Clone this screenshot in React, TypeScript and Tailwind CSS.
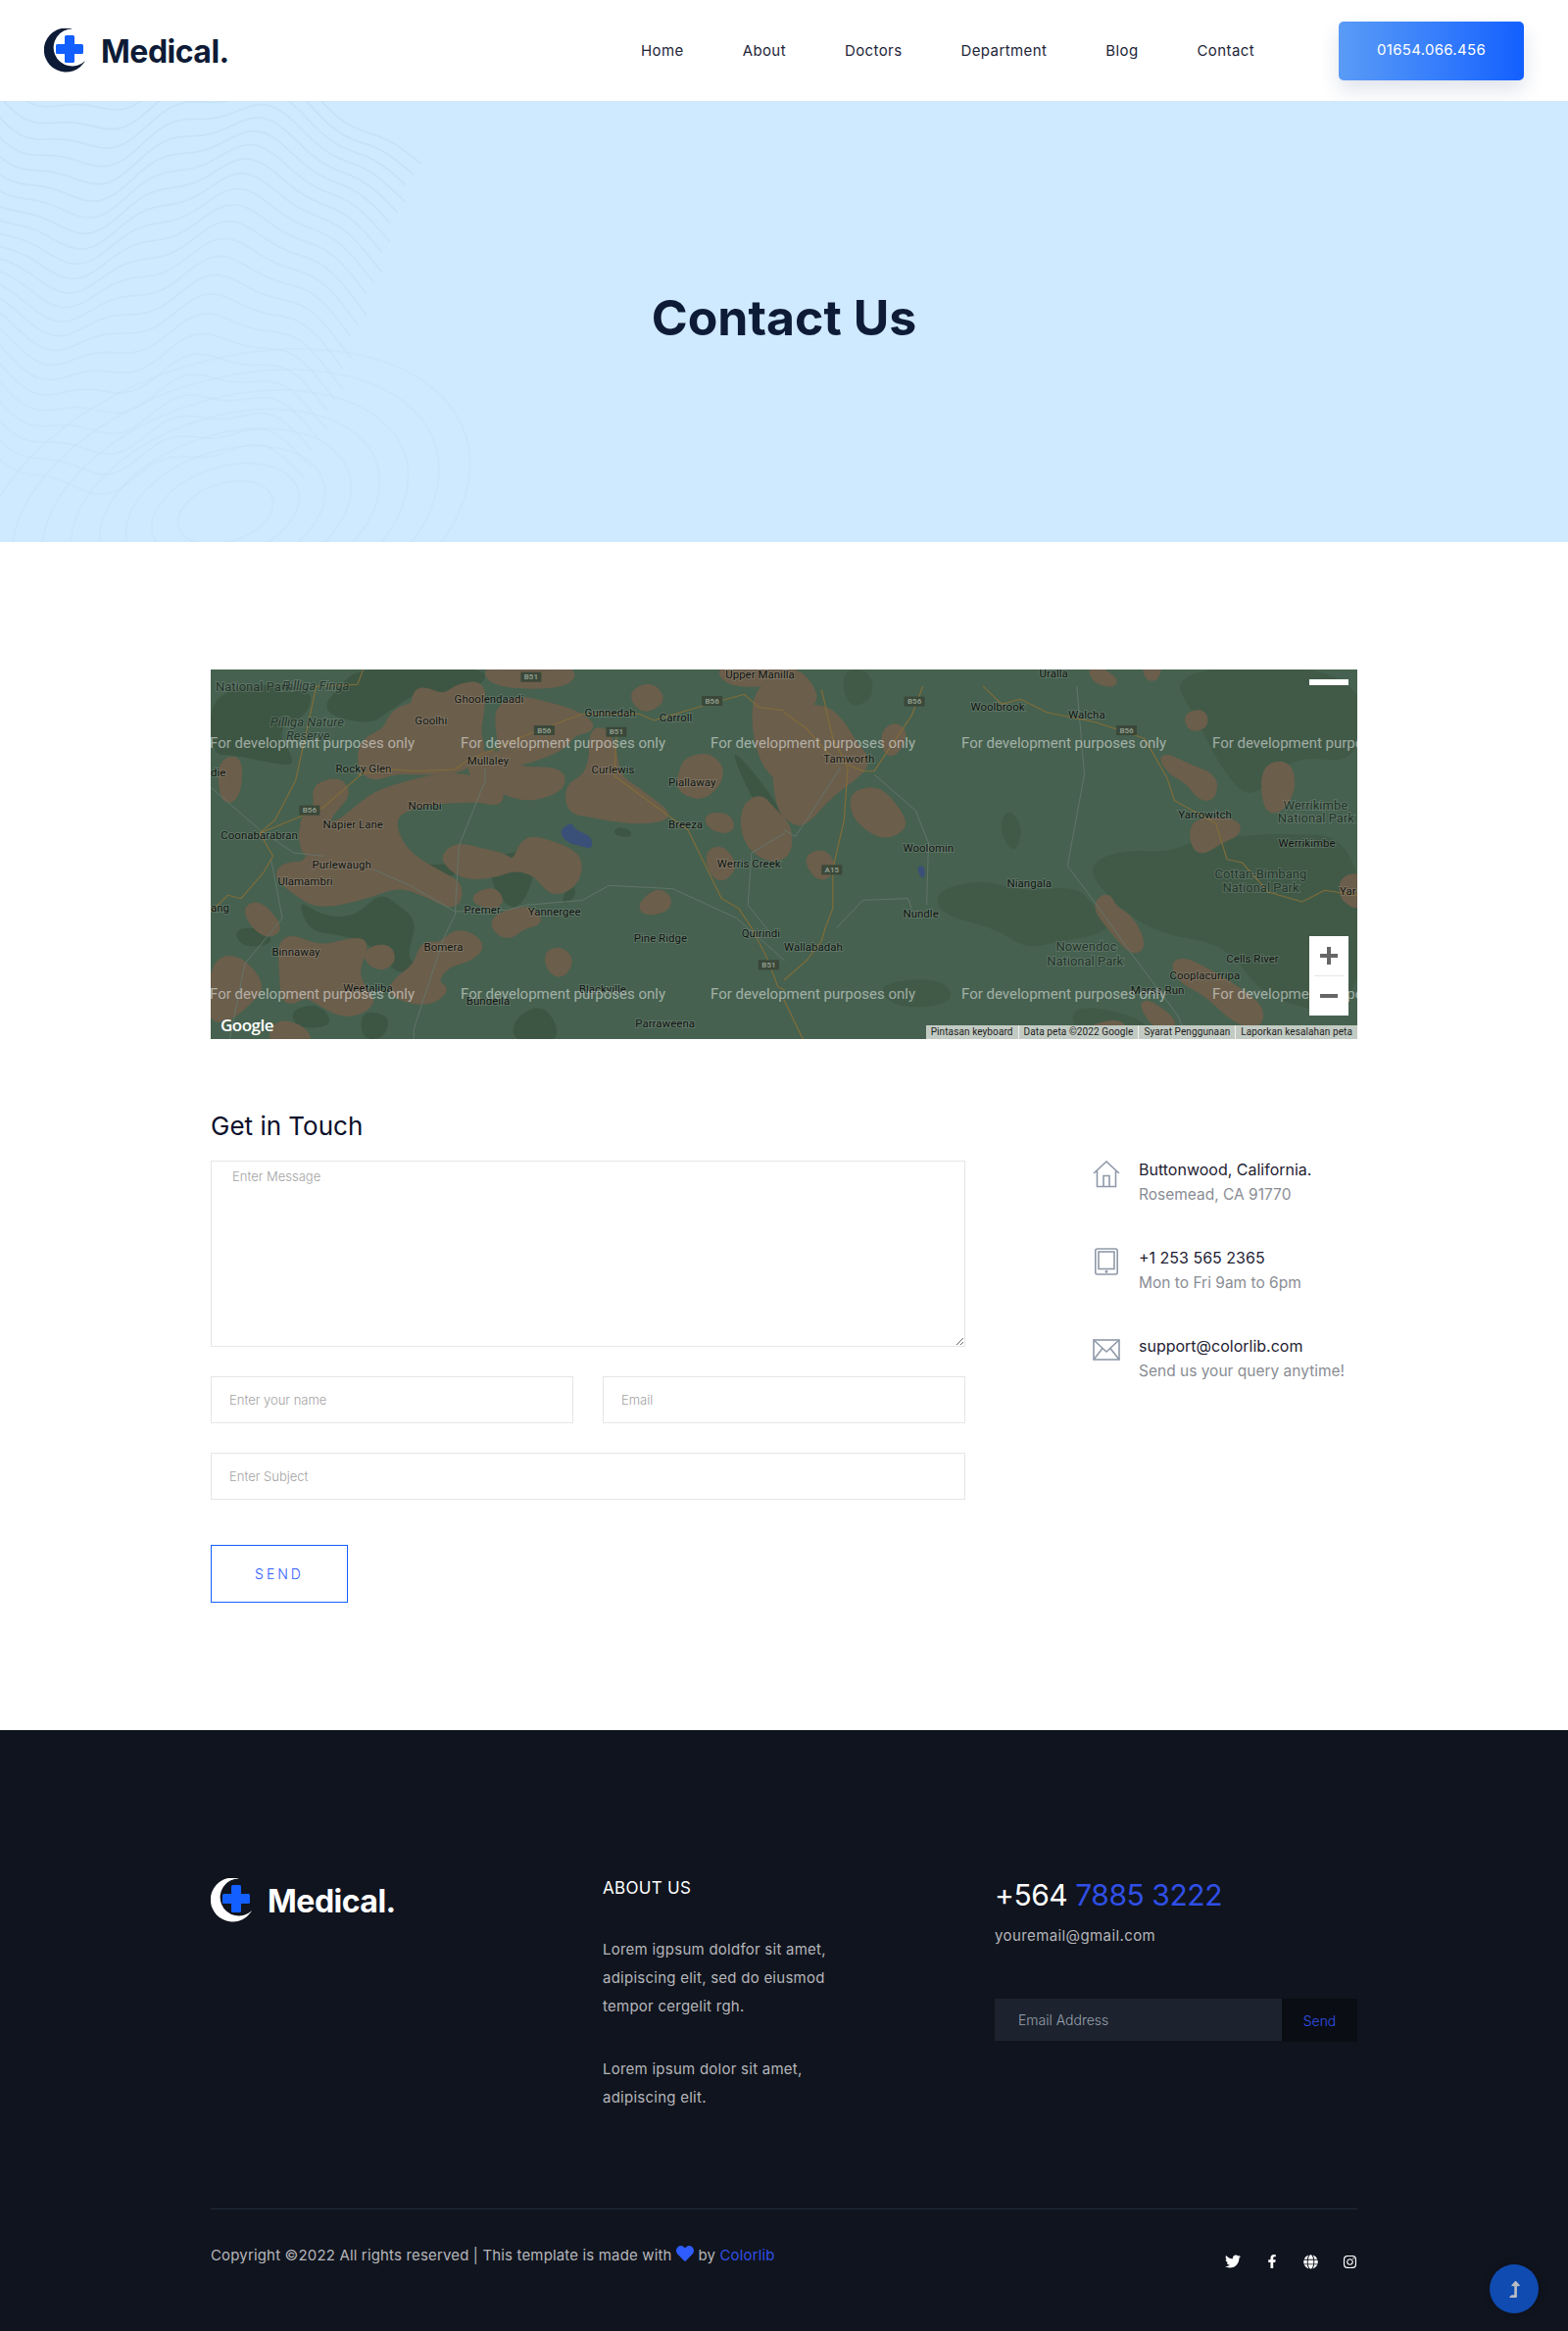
import { FaTwitter, FaFacebookF, FaGlobe, FaInstagram, FaLevelUpAlt, FaHeart } from 'react-icons/fa';

// map sketch: shapes are noted in crop coordinates, left crop and right crop
const LEFT = 'translate(-15 -13) scale(0.3831 0.3333)';
const RIGHT = 'translate(585 -13) scale(0.3831 0.3333)';
const toLeft = (x: number, y: number) => [x / 2.61 - 15, y / 3 - 13];
const toRight = (x: number, y: number) => [x / 2.61 + 585, y / 3 - 13];

function blob(points: number[]) {
  const pts: number[][] = [];
  for (let i = 0; i < points.length; i += 2) pts.push([points[i], points[i + 1]]);
  const mid = (a: number[], b: number[]) => [(a[0] + b[0]) / 2, (a[1] + b[1]) / 2];
  const start = mid(pts[pts.length - 1], pts[0]);
  let d = `M${start[0]} ${start[1]}`;
  pts.forEach((p, i) => {
    const m = mid(p, pts[(i + 1) % pts.length]);
    d += `Q${p[0]} ${p[1]} ${m[0]} ${m[1]}`;
  });
  return d + 'Z';
}

const darkLeft = [
  [39, 90, 310, 85, 300, 180, 210, 220, 270, 330, 220, 330, 100, 300, 39, 300],
  [440, 30, 770, 30, 770, 85, 700, 85, 660, 125, 600, 100, 510, 170, 460, 210, 330, 170, 380, 90],
  [800, 610, 880, 590, 905, 660, 870, 760, 830, 770, 780, 680],
  [270, 740, 330, 790, 420, 800, 490, 720, 540, 760, 590, 810, 560, 920, 590, 940, 540, 980, 470, 880, 380, 850, 300, 840],
  [850, 1100, 930, 1060, 980, 1180, 840, 1180],
  [530, 590, 600, 640, 690, 630, 690, 680, 600, 680, 540, 650],
  [990, 700, 1010, 700, 1010, 740, 970, 760],
  [1120, 520, 1160, 530, 1160, 555, 1110, 545],
  [1420, 280, 1470, 330, 1568, 480, 1568, 560, 1500, 480],
  [100, 830, 180, 830, 210, 880, 120, 890],
  [250, 1080, 330, 1060, 370, 1130, 270, 1140],
  [440, 1080, 520, 1100, 500, 1170, 440, 1170],
];
const brownLeft = [
  [760, 85, 700, 95, 660, 130, 600, 100, 585, 130, 590, 150, 530, 170, 510, 230, 450, 260, 440, 330, 470, 370, 530, 345, 600, 350, 700, 345, 735, 310, 760, 290, 745, 230, 755, 170],
  [770, 30, 1000, 30, 990, 85, 800, 85],
  [810, 160, 860, 130, 930, 150, 1000, 170, 1060, 215, 1000, 230, 970, 280, 840, 330, 820, 300, 810, 210],
  [730, 300, 840, 300, 850, 350, 970, 350, 970, 400, 900, 430, 845, 420, 810, 400, 745, 380],
  [1060, 230, 1090, 230, 1110, 300, 1120, 370, 1170, 410, 1240, 470, 1250, 490, 1180, 500, 1100, 490, 1060, 480, 1000, 470, 995, 400, 1040, 370, 1060, 320],
  [320, 400, 380, 380, 400, 420, 360, 470, 340, 510, 380, 520, 470, 430, 540, 400, 640, 370, 735, 370, 770, 410, 810, 420, 800, 445, 750, 430, 620, 440, 530, 470, 520, 530, 560, 610, 650, 670, 700, 700, 690, 765, 620, 725, 540, 690, 450, 730, 330, 760, 270, 720, 220, 670, 240, 640, 300, 640, 320, 560, 280, 510, 330, 460],
  [665, 610, 700, 580, 760, 600, 810, 610, 850, 640, 880, 560, 930, 570, 1000, 600, 1020, 640, 1000, 700, 950, 720, 910, 660, 850, 640, 790, 665, 720, 670, 680, 640],
  [740, 740, 790, 715, 810, 750, 780, 760],
  [800, 800, 880, 770, 915, 810, 870, 820, 830, 855, 800, 830],
  [1190, 760, 1230, 720, 1255, 740, 1250, 770, 1200, 780],
  [1310, 320, 1360, 305, 1395, 340, 1385, 390, 1340, 430, 1290, 400, 1300, 350],
  [1370, 490, 1410, 490, 1425, 520, 1400, 530, 1370, 510],
  [1460, 470, 1500, 430, 1530, 470, 1575, 520, 1575, 600, 1530, 620, 1470, 570],
  [1370, 600, 1400, 590, 1430, 640, 1400, 680, 1375, 650],
  [1490, 100, 1575, 80, 1575, 400, 1500, 300],
  [1170, 110, 1210, 90, 1240, 130, 1200, 160, 1175, 140],
  [1390, 30, 1575, 30, 1575, 70, 1430, 85],
  [140, 770, 170, 760, 220, 830, 190, 850, 150, 810],
  [50, 940, 110, 920, 175, 1010, 130, 1060, 90, 1100, 39, 1110],
  [230, 850, 330, 900, 420, 870, 450, 880, 420, 960, 440, 1020, 470, 1060, 400, 1100, 310, 1040, 290, 1030, 240, 1060, 235, 980],
  [610, 880, 650, 890, 700, 840, 760, 880, 730, 920, 660, 940, 630, 1000, 665, 1020, 610, 1060, 520, 1030, 540, 990, 590, 950],
  [465, 900, 510, 890, 520, 930, 490, 950, 460, 925],
  [940, 910, 970, 900, 995, 930, 970, 975, 945, 950],
  [220, 1120, 280, 1140, 300, 1180, 200, 1180],
  [70, 330, 110, 310, 110, 400, 90, 440, 75, 420],
  [290, 510, 340, 520, 340, 590, 300, 610, 285, 560],
];
const darkRight = [
  [800, 640, 900, 590, 1020, 600, 1100, 560, 1300, 540, 1540, 550, 1540, 1110, 1280, 1050, 1180, 880, 1000, 850, 880, 760],
  [1020, 30, 1540, 30, 1540, 330, 1350, 300, 1250, 440, 1180, 370, 1100, 200],
  [400, 720, 520, 680, 640, 720, 780, 700, 830, 770, 880, 840, 700, 880, 640, 890, 560, 830, 420, 790],
  [570, 520, 600, 460, 640, 530, 610, 610],
  [240, 1000, 420, 980, 460, 1060, 300, 1080],
  [760, 1060, 950, 1100, 980, 1170, 780, 1170],
  [150, 40, 230, 40, 240, 130, 170, 160],
];
const brownRight = [
  [-20, 170, 100, 150, 150, 200, 180, 260, 230, 330, 120, 420, 60, 500, 30, 510, -20, 450],
  [-20, 30, 55, 60, 90, 150, -20, 150],
  [185, 420, 250, 405, 300, 470, 320, 520, 270, 550, 220, 520, 190, 480],
  [70, 610, 110, 600, 130, 650, 100, 680, 70, 640],
  [270, 230, 300, 210, 320, 240, 290, 300, 270, 280],
  [1005, 300, 1080, 340, 1145, 370, 1140, 430, 1110, 430, 1080, 380, 1030, 350],
  [1280, 340, 1340, 325, 1355, 400, 1320, 470, 1285, 465],
  [1075, 180, 1115, 170, 1120, 210, 1085, 220],
  [1095, 510, 1150, 500, 1205, 510, 1205, 540, 1160, 560, 1110, 600, 1090, 560],
  [830, 765, 860, 730, 875, 770, 920, 800, 955, 880, 930, 905, 880, 840],
  [1040, 940, 1070, 930, 1150, 980, 1220, 1030, 1270, 1080, 1260, 1130, 1200, 1110, 1130, 1030, 1060, 990],
  [950, 1050, 1010, 1090, 1040, 1130, 990, 1130],
  [1490, 680, 1540, 670, 1540, 770, 1490, 740],
  [820, 30, 880, 70, 870, 85, 830, 70],
  [960, 30, 1000, 30, 980, 75],
  [810, 1140, 900, 1115, 910, 1180, 830, 1180],
];

const orangeLeft = [
  '445,40 430,85 320,90 300,200 265,380 210,500 170,540 340,460 450,350',
  '430,360 530,345 580,350 690,345 720,320 900,230 1030,175 1180,175 1220,195 1350,150 1460,115 1500,155 1568,165',
  '1120,230 1115,365 1250,480 1310,530 1400,740 1445,770 1480,830 1520,920 1550,1010 1568,1020',
  '170,540 205,610 180,660 120,740 85,730 40,780',
];
const greyLeft = [
  '770,340 770,380 700,580 690,790 660,860 580,1140 580,1170',
  '470,650 570,700 690,780 830,775 880,760 1030,745 1100,700 1270,710 1440,800 1568,930',
  '200,620 230,800 130,940 90,1170',
  '40,400 90,450 170,530 260,600 340,610',
  '1568,540 1480,600 1470,760 1540,860',
];
const orangeRight = [
  '100,100 130,250 170,340 160,500 130,650 130,770 110,830 100,870 60,930 0,990',
  '370,90 340,180 240,350 210,350 170,330',
  '530,90 580,145 630,130 700,170 830,200 960,250 1020,370 1040,440 1150,510 1180,620 1220,630 1290,720 1380,750 1440,715 1530,730',
  '0,170 60,220 120,300',
  '0,1050 50,1170',
];
const greyRight = [
  '240,360 350,470 385,570 380,760',
  '780,90 800,360 755,640 840,770 920,900 1050,1100 1060,1130',
  '140,830 210,745 330,740 340,770',
  '150,340 60,500 30,550 0,530',
];

type Label = [number, number, string, number?];
// [left, middle, text, kind]  kind 1 = park name, 2 = italic park name
const labelsLeft: Label[] = [
  [1410, 58, 'Upper Manilla'], [688, 132, 'Ghoolendaadi'], [583, 198, 'Goolhi'], [1035, 174, 'Gunnedah'],
  [1234, 189, 'Carroll'], [198, 203, 'Pilliga Nature', 2], [240, 244, 'Reserve', 2], [52, 95, 'National Park', 1],
  [230, 93, 'Pilliga Finga', 2], [722, 322, 'Mullaley'], [372, 346, 'Rocky Glen'], [1053, 348, 'Curlewis'],
  [1258, 388, 'Piallaway'], [565, 459, 'Nombi'], [338, 516, 'Napier Lane'], [1258, 516, 'Breeza'],
  [66, 549, 'Coonabarabran'], [309, 640, 'Purlewaugh'], [1388, 636, 'Werris Creek'], [218, 690, 'Ulamambri'],
  [714, 778, 'Premer'], [884, 784, 'Yannergee'], [1166, 865, 'Pine Ridge'], [1453, 849, 'Quirindi'],
  [607, 892, 'Bomera'], [202, 907, 'Binnaway'], [392, 1017, 'Weetaliba'], [1020, 1020, 'Blackville'],
  [720, 1057, 'Bundella'], [1170, 1126, 'Parraweena'], [39, 357, 'die'], [39, 772, 'ang'],
];
const labelsRight: Label[] = [
  [680, 55, 'Uralla'], [497, 155, 'Woolbrook'], [757, 180, 'Walcha'], [105, 316, 'Tamworth'],
  [1050, 486, 'Yarrowitch'], [1330, 457, 'Werrikimbe', 1], [1315, 498, 'National Park', 1], [1317, 573, 'Werrikimbe'],
  [317, 588, 'Woolomin'], [1147, 667, 'Cottan-Bimbang', 1], [1168, 709, 'National Park', 1], [594, 697, 'Niangala'],
  [317, 790, 'Nundle'], [0, 891, 'Wallabadah'], [724, 891, 'Nowendoc', 1], [700, 934, 'National Park', 1],
  [1178, 927, 'Cells River'], [1027, 978, 'Cooplacurripa'], [923, 1023, 'Marss Run'], [1480, 720, 'Yar'],
];
const shieldsLeft: [number, number, string][] = [
  [865, 47, 'B51'], [1347, 120, 'B56'], [900, 210, 'B56'], [1092, 215, 'B51'], [275, 455, 'B56'], [1498, 928, 'B51'],
];
const shieldsRight: [number, number, string][] = [
  [320, 122, 'B56'], [885, 210, 'B56'], [100, 637, 'A15'],
];

function MapLabel({ at, text, kind }: { at: number[]; text: string; kind?: number }) {
  return (
    <text
      x={at[0]}
      y={at[1]}
      dominantBaseline="middle"
      fontFamily="Roboto, sans-serif"
      fontSize={kind ? 13 : 11.5}
      fontStyle={kind === 2 ? 'italic' : 'normal'}
      fill={kind ? '#24352a' : '#111511'}
      stroke="#ffffff"
      strokeOpacity={0.14}
      strokeWidth={2}
      paintOrder="stroke"
    >
      {text}
    </text>
  );
}

function Shield({ at, text }: { at: number[]; text: string }) {
  return (
    <g>
      <rect x={at[0]} y={at[1]} width={21} height={10} fill="#3b4839" />
      <text x={at[0] + 10.5} y={at[1] + 5.5} textAnchor="middle" dominantBaseline="middle" fontFamily="Roboto, sans-serif" fontSize={8} fontWeight={700} fill="#8d9a8a">
        {text}
      </text>
    </g>
  );
}

function MapDrawing() {
  const marks = [-1, 255, 510, 766, 1022];
  return (
    <svg viewBox="0 0 1170 377" width={1170} height={377} className="block">
      <rect width={1170} height={377} fill="#46614f" />
      <g transform={LEFT}>
        {darkLeft.map((p, i) => <path key={i} d={blob(p)} fill="#3d5643" />)}
        {brownLeft.map((p, i) => <path key={i} d={blob(p)} fill="#6b5e4b" stroke="#6b5e4b" strokeWidth={26} strokeLinejoin="round" />)}
        <path d={blob([965, 535, 1000, 505, 1010, 530, 1055, 550, 1055, 590, 1030, 580, 990, 570])} fill="#3a5078" />
        {greyLeft.map((p, i) => <polyline key={i} points={p} fill="none" stroke="#65756c" strokeWidth={2.500} />)}
        {orangeLeft.map((p, i) => <polyline key={i} points={p} fill="none" stroke="#846d38" strokeWidth={3} />)}
      </g>
      <g transform={RIGHT}>
        {darkRight.map((p, i) => <path key={i} d={blob(p)} fill="#415a48" />)}
        {brownRight.map((p, i) => <path key={i} d={blob(p)} fill="#6b5e4b" stroke="#6b5e4b" strokeWidth={22} strokeLinejoin="round" />)}
        <path d={blob([355, 640, 375, 640, 375, 680, 360, 670])} fill="#3a5078" />
        {greyRight.map((p, i) => <polyline key={i} points={p} fill="none" stroke="#65756c" strokeWidth={2.500} />)}
        {orangeRight.map((p, i) => <polyline key={i} points={p} fill="none" stroke="#846d38" strokeWidth={3} />)}
      </g>
      {shieldsLeft.map(([x, y, t]) => <Shield key={`${x}${t}`} at={toLeft(x, y)} text={t} />)}
      {shieldsRight.map(([x, y, t]) => <Shield key={`r${x}${t}`} at={toRight(x, y)} text={t} />)}
      {labelsLeft.map(([x, y, t, k]) => <MapLabel key={`${x}${t}`} at={toLeft(x, y)} text={t} kind={k} />)}
      {labelsRight.map(([x, y, t, k]) => <MapLabel key={`r${x}${t}`} at={toRight(x, y)} text={t} kind={k} />)}
      {[76, 332].map((y) =>
        marks.map((x) => (
          <text key={`${x}-${y}`} x={x} y={y} dominantBaseline="middle" fontFamily="Roboto, sans-serif" fontSize={15} fill="#ffffff" fillOpacity={0.5}>
            For development purposes only
          </text>
        )),
      )}
    </svg>
  );
}

function Logo({ moon, text }: { moon: string; text: string }) {
  return (
    <div className="flex items-center">
      <svg viewBox="0 0 44 46" width={44} height={46} className="shrink-0">
        <path d="M29 .5A22.500 22.500 0 1 0 42 33A19 19 0 1 1 29 .5Z" fill={moon} />
        <rect x="21" y="7" width="10" height="28" rx="1.500" fill="#135fff" />
        <rect x="12" y="16" width="28" height="10" rx="1.500" fill="#135fff" />
      </svg>
      <span className={`mt-[2px] ml-[14px] text-[32px] leading-[46px] font-bold tracking-[-0.5px] ${text}`}>Medical.</span>
    </div>
  );
}

function HeroLines() {
  const waves: string[] = [];
  for (let i = 0; i < 24; i++) {
    let d = '';
    const end = 430 - i * 5;
    for (let x = -10; x <= end; x += 8) {
      const y = i * 17 - 50 + x * 0.18 + 42 * Math.sin(x / 62 + 0.6) + 7 * Math.sin(x / 17 + i / 3) + 10 * Math.sin(i / 4 + x / 120);
      d += `${d ? 'L' : 'M'}${x} ${y.toFixed(1)}`;
    }
    waves.push(d);
  }
  const rings = [40, 62, 84, 106, 130, 154, 180, 206];
  return (
    <svg viewBox="0 0 620 450" width={620} height={450} className="absolute top-0 left-0" fill="none" stroke="#c4e0f5" strokeWidth={1.6}>
      {waves.map((d, i) => <path key={i} d={d} strokeOpacity={0.85 - i * 0.022} />)}
      {rings.map((r) => <ellipse key={r} cx={230} cy={420} rx={r * 1.25} ry={r * 0.75} strokeOpacity={0.4} transform="rotate(-18 230 420)" />)}
    </svg>
  );
}

const nav = ['Home', 'About', 'Doctors', 'Department', 'Blog', 'Contact'];

const infoRows = [
  { title: 'Buttonwood, California.', sub: 'Rosemead, CA 91770', icon: 'home', pad: 'pt-[3px]' },
  { title: '+1 253 565 2365', sub: 'Mon to Fri 9am to 6pm', icon: 'tablet', pad: 'pt-[2px]' },
  { title: 'support@colorlib.com', sub: 'Send us your query anytime!', icon: 'mail', pad: 'pt-[5px]' },
];

function InfoIcon({ name }: { name: string }) {
  if (name === 'home') {
    return (
      <svg viewBox="0 0 28 28" width={28} height={28} fill="none" stroke="#8f99a8" strokeWidth={1.6}>
        <path d="M1 13 14 1l13 12M4.500 10.500V26.500h19V10.500M11 26.500V15.500h6v11" />
      </svg>
    );
  }
  if (name === 'tablet') {
    return (
      <svg viewBox="0 0 28 28" width={28} height={28} fill="none" stroke="#8f99a8" strokeWidth={1.6}>
        <rect x="2.800" y="1" width="22.400" height="26" rx="2" />
        <rect x="6" y="4" width="16" height="17.500" />
        <circle cx="14" cy="24.300" r=".7" fill="#8f99a8" />
      </svg>
    );
  }
  return (
    <svg viewBox="0 0 28 22" width={28} height={22} fill="none" stroke="#8f99a8" strokeWidth={1.6}>
      <rect x="1" y="1" width="26" height="20" />
      <path d="M1 1l13 12L27 1M1 21l9-11.500M27 21l-9-11.500" />
    </svg>
  );
}

const fieldClass =
  'block h-[48px] w-full rounded-none border border-[#e5e6e9] bg-white pl-[18px] text-[13px] font-light text-[#444] outline-none placeholder:text-[#a3a3a3]';

export default function App() {
  return (
    <div className="relative min-h-[2378px] bg-white font-['Inter',sans-serif] text-[#0e1b36]">
      <header className="flex h-[103px] items-center bg-white pr-[45px] pl-[45px]">
        <Logo moon="#0e1b36" text="text-[#0e1b36]" />
        <nav className="ml-auto flex items-center gap-[60px]">
          {nav.map((item) => (
            <a key={item} href="#" className="text-[15px] leading-[22px] font-normal tracking-[0.4px] text-[#1e2538]">
              {item}
            </a>
          ))}
        </nav>
        <a
          href="#"
          className="ml-[86px] flex h-[60px] w-[189px] items-center justify-center rounded-[5px] bg-gradient-to-r from-[#5a9bf6] to-[#135fff] text-[15px] font-normal tracking-[0.3px] text-white shadow-[0_10px_20px_rgba(30,60,110,0.14)]"
        >
          01654.066.456
        </a>
      </header>

      <section className="relative flex h-[450px] items-center justify-center overflow-hidden bg-[#cfe9fe]">
        <HeroLines />
        <h1 className="relative mb-[8px] text-[50px] leading-[60px] font-bold text-[#0e1b36]">Contact Us</h1>
      </section>

      <main className="mx-auto w-[1170px] pt-[130px]">
        <div className="relative h-[377px] overflow-hidden">
          <MapDrawing />
          <span className="absolute bottom-[4px] left-[10px] font-['Open_Sans',sans-serif] text-[17px] leading-[20px] font-semibold tracking-[-0.5px] text-white">Google</span>
          <div className="absolute top-[10px] right-[9px] h-[6px] w-[40px] bg-white" />
          <div className="absolute right-[9px] bottom-[24px] flex h-[81px] w-[40px] flex-col items-center bg-white text-[#666]">
            <svg viewBox="0 0 18 18" width={18} height={18} className="mt-[11px]" fill="#666">
              <path d="M7 0h4v7h7v4h-7v7H7v-7H0V7h7z" />
            </svg>
            <div className="mt-[11px] h-px w-[30px] bg-[#e6e6e6]" />
            <svg viewBox="0 0 18 4" width={18} height={4} className="mt-[18px]" fill="#666">
              <rect width={18} height={4} />
            </svg>
          </div>
          <div className="absolute right-0 bottom-0 flex h-[14px] items-center bg-[#c2cbc3] font-['Roboto',sans-serif] text-[10px] leading-[14px] tracking-[0.1px] text-[#222]">
            <span className="px-[5px]">Pintasan keyboard</span>
            <span className="border-l border-[#f0f0f0] px-[5px]">Data peta ©2022 Google</span>
            <span className="border-l border-[#f0f0f0] px-[5px]">Syarat Penggunaan</span>
            <span className="border-l border-[#f0f0f0] px-[5px]">Laporkan kesalahan peta</span>
          </div>
        </div>

        <div className="flex pb-[130px]">
          <form className="w-[770px] pt-[72px]" onSubmit={(e) => e.preventDefault()}>
            <h2 className="mb-[18px] text-[26px] leading-[34px] font-normal text-[#0b0f2a]">Get in Touch</h2>
            <textarea
              placeholder="Enter Message"
              className="block h-[190px] w-full rounded-none border border-[#e5e6e9] bg-white px-[21px] py-[5px] text-[13px] leading-[20px] font-light outline-none placeholder:text-[#a3a3a3]"
            />
            <div className="mt-[30px] grid grid-cols-2 gap-[30px]">
              <input placeholder="Enter your name" className={fieldClass} />
              <input placeholder="Email" className={fieldClass} />
            </div>
            <input placeholder="Enter Subject" className={`${fieldClass} mt-[30px]`} />
            <button className="mt-[46px] block h-[59px] w-[140px] border border-[#135fff] text-[14px] font-light tracking-[3px] text-[#2f5cff]">
              SEND
            </button>
          </form>

          <div className="ml-[130px] flex-1 pt-[121px]">
            {infoRows.map((row) => (
              <div key={row.title} className="mb-[40px] flex">
                <div className={`flex w-[47px] shrink-0 justify-start ${row.pad}`}>
                  <InfoIcon name={row.icon} />
                </div>
                <div>
                  <div className="text-[16px] leading-[24px] text-[#1f2233]">{row.title}</div>
                  <div className="mt-[2px] text-[15.500px] leading-[24px] text-[#8a8d94]">{row.sub}</div>
                </div>
              </div>
            ))}
          </div>
        </div>
      </main>

      <footer className="h-[613px] bg-[#10141e] pt-[150px]">
        <div className="mx-auto w-[1170px]">
          <div className="flex h-[338px]">
            <div className="w-[400px]">
              <Logo moon="#ffffff" text="text-white" />
            </div>
            <div className="w-[400px]">
              <h4 className="text-[17px] leading-[22px] font-normal tracking-[0.3px] text-white">ABOUT US</h4>
              <p className="mt-[37px] w-[260px] text-[15px] leading-[29px] tracking-[0.25px] text-[#b5b6ba]">
                Lorem igpsum doldfor sit amet, adipiscing elit, sed do eiusmod tempor cergelit rgh.
              </p>
              <p className="mt-[35px] w-[260px] text-[15px] leading-[29px] tracking-[0.25px] text-[#b5b6ba]">
                Lorem ipsum dolor sit amet, adipiscing elit.
              </p>
            </div>
            <div className="flex-1">
              <div className="text-[30px] leading-[36px] tracking-[-0.45px] text-white">
                +564 <span className="text-[#2f4fe6]">7885 3222</span>
              </div>
              <div className="mt-[13px] text-[15px] leading-[22px] tracking-[0.4px] text-[#b5b6ba]">youremail@gmail.com</div>
              <form className="mt-[53px] flex items-start" onSubmit={(e) => e.preventDefault()}>
                <input
                  placeholder="Email Address"
                  className="h-[43px] w-[293px] bg-[#1c232f] pl-[24px] text-[14px] font-light text-white outline-none placeholder:text-[#9aa0ab]"
                />
                <button className="h-[44px] flex-1 bg-[#0a0d14] text-[14px] font-light text-[#2f4fe6]">Send</button>
              </form>
            </div>
          </div>
          <div className="flex items-start justify-between border-t border-[#232b3b] pt-[36px]">
            <p className="text-[15px] leading-[22px] tracking-[0.16px] text-[#b5b6ba]">
              Copyright ©2022 All rights reserved | This template is made with{' '}
              <FaHeart className="inline-block align-[-2px] text-[#2f5cff]" size={18} /> by{' '}
              <a href="#" className="text-[#2f4fe6]">Colorlib</a>
            </p>
            <div className="flex items-center gap-[25px] pt-[9px] text-white">
              <FaTwitter size={16} />
              <FaFacebookF size={14} />
              <FaGlobe size={15} />
              <FaInstagram size={15} />
            </div>
          </div>
        </div>
      </footer>

      <a href="#" className="fixed right-[30px] bottom-[18px] flex h-[50px] w-[50px] items-center justify-center rounded-full bg-[#0f4bb0] text-[#b9bcc2] shadow-[0_0_10px_rgba(0,0,0,0.2)]">
        <FaLevelUpAlt size={17} />
      </a>
    </div>
  );
}
